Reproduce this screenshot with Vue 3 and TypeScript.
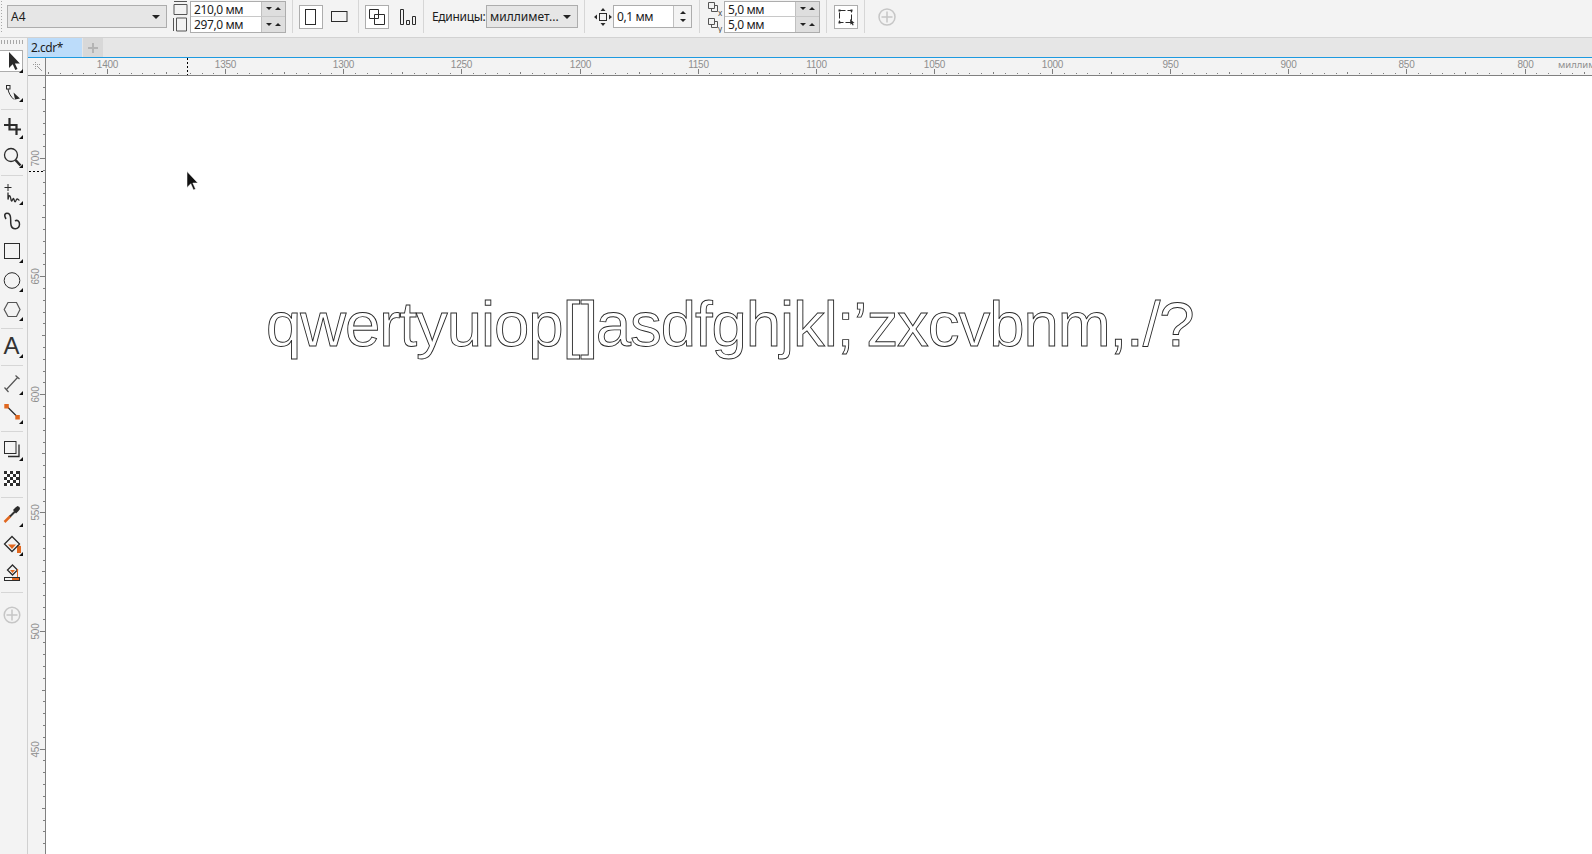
<template>
  <div class="app">
    <header class="topbar">
      <div class="grip" />
      <div class="select size-select"><span>A4</span><i class="caret" /></div>
      <div class="pair-icons">
        <svg width="15" height="15" viewBox="0 0 15 15"><path d="M1 .5h13M1 3.500h13v10H1z" /></svg>
        <svg width="15" height="15" viewBox="0 0 15 15"><path d="M.5 1v13M3.500 1h10v13h-10z" /></svg>
      </div>
      <div class="pair">
        <div class="pair-row"><span class="val">210,0 мм</span><span class="spin"><i class="caret small" /><i class="caret small up" /></span></div>
        <div class="pair-row"><span class="val">297,0 мм</span><span class="spin"><i class="caret small" /><i class="caret small up" /></span></div>
      </div>
      <div class="divider" />
      <button class="btn on"><svg width="12" height="16" viewBox="0 0 12 16"><rect x=".5" y=".5" width="10" height="15" /></svg></button>
      <button class="btn"><svg width="17" height="12" viewBox="0 0 17 12"><rect x=".5" y=".5" width="15.500" height="10" /></svg></button>
      <div class="divider d2" />
      <button class="btn on"><svg width="18" height="18" viewBox="0 0 18 18"><path d="M1.500 1.500h9v9h-9zM6.500 6.500h10v10h-10z" /></svg></button>
      <button class="btn wide"><svg width="17" height="16" viewBox="0 0 17 16"><path d="M1.500.5h3v15h-3zM7.500 11.500h3v4h-3zM13.500 7.500h3v8h-3z" /></svg></button>
      <div class="divider d3" />
      <span class="label">Единицы:</span>
      <div class="select unit-select"><span>миллимет...</span><i class="caret" /></div>
      <div class="divider d4" />
      <svg class="nudge" width="18" height="18" viewBox="0 0 18 18">
        <path class="solid" d="M9 0l2.500 3h-5zM9 18l2.500-3h-5zM0 9l3-2.500v5zM18 9l-3-2.500v5z" />
        <rect x="5.500" y="5.500" width="7" height="7" />
      </svg>
      <div class="single">
        <span class="val">0,1 мм</span>
        <span class="spin column"><i class="caret small up" /><i class="caret small" /></span>
      </div>
      <div class="divider d5" />
      <div class="pair-icons dup">
        <svg width="16" height="16" viewBox="0 0 16 16"><path d="M.5 1.500h6v6h-6zM3.500 7.500v3h6v-6h-3" /><text x="10" y="15">x</text></svg>
        <svg width="16" height="16" viewBox="0 0 16 16"><path d="M.5 1.500h6v6h-6zM3.500 7.500v3h6v-6h-3" /><text x="10" y="15">y</text></svg>
      </div>
      <div class="pair dup-pair">
        <div class="pair-row"><span class="val">5,0 мм</span><span class="spin"><i class="caret small" /><i class="caret small up" /></span></div>
        <div class="pair-row"><span class="val">5,0 мм</span><span class="spin"><i class="caret small" /><i class="caret small up" /></span></div>
      </div>
      <div class="divider d6" />
      <button class="btn on bleed">
        <svg width="18" height="18" viewBox="0 0 18 18">
          <rect x="2.500" y="2.500" width="12" height="12" stroke-dasharray="6 2" />
          <path class="solid" d="M1.500 1.500h2v2h-2zM13.500 1.500h2v2h-2zM1.500 13.500h2v2h-2zM13 11l4.500 4-1.800.3 1 1.700-1 .5-1-1.700-1.200 1z" />
        </svg>
      </button>
      <div class="divider d7" />
      <svg class="add-top" width="18" height="18" viewBox="0 0 18 18">
        <circle cx="9" cy="9" r="8" />
        <path d="M9 3.500v11M3.500 9h11" />
      </svg>
    </header>

    <div class="body">
      <aside class="toolbox">
        <div class="tool-grip" />
        <div class="tool fly">
          <div class="tool-on" />
          <svg viewBox="0 0 27 29"><path class="fill" d="M9 6v16l3.700-3.800 2.600 5.800 2.200-1-2.600-5.600h5z" transform="translate(0 -1)" /></svg>
        </div>
        <div class="tool fly">
          <svg viewBox="0 0 27 29"><rect x="6.500" y="9.500" width="3.500" height="3.500" /><path d="M8 13c.5 4 3 8 6 10.500" /><path class="fill" d="M13.500 16.500l6.500 6-5 1z" /></svg>
        </div>
        <div class="sep" />
        <div class="tool fly">
          <svg viewBox="0 0 27 29" class="thick"><path d="M9.500 5v11.500H21M4 12h12.500v10" /></svg>
        </div>
        <div class="tool fly">
          <svg viewBox="0 0 27 29"><circle cx="11" cy="13" r="6.500" stroke-width="1.300" /><path d="M15.500 18l5 5.500" class="heavy" /></svg>
        </div>
        <div class="sep" />
        <div class="tool fly">
          <svg viewBox="0 0 27 29"><path d="M8 5v7M4.500 8.500h7" /><path d="M8 13.500v7c1-5 2-5 3 0s2-4 3 0 1.500 2 2.500 0 1.500 1 3 .5" class="mid" /></svg>
        </div>
        <div class="tool">
          <svg viewBox="0 0 27 29" class="curl"><path d="M6 11C3 6 6 4.500 8.500 5.500c3.500 1.500 1.500 7.500 2.500 11.500 1 5 8 5 8.500-.5.300-3.500-2.500-5-4.500-3.500" /></svg>
        </div>
        <div class="tool fly">
          <svg viewBox="0 0 27 29"><rect x="4.500" y="6.500" width="15" height="15" /></svg>
        </div>
        <div class="tool fly">
          <svg viewBox="0 0 27 29"><circle cx="12" cy="14.500" r="7.800" /></svg>
        </div>
        <div class="tool fly">
          <svg viewBox="0 0 27 29" class="gray"><path d="M8 7.500h8.500l3.500 7-3.500 7H8l-3.800-7z" /></svg>
        </div>
        <div class="sep" />
        <div class="tool fly">
          <svg viewBox="0 0 27 29"><text class="tool-a" x="3.500" y="22">A</text></svg>
        </div>
        <div class="sep" />
        <div class="tool fly">
          <svg viewBox="0 0 27 29" class="gray"><path d="M6 21L18 8M4.500 18.500l4 4.500M15.500 6.500l4 3.500" /></svg>
        </div>
        <div class="tool fly">
          <svg viewBox="0 0 27 29"><path d="M6.500 8l11 11" class="mid" /><rect class="orange" x="4.300" y="6" width="4.500" height="4.500" /><rect class="orange" x="15.300" y="17" width="4.500" height="4.500" /></svg>
        </div>
        <div class="sep" />
        <div class="tool fly">
          <svg viewBox="0 0 27 29"><rect x="4.500" y="6.500" width="11.500" height="12" /><path d="M19 9.500v12H8" class="mid" /></svg>
        </div>
        <div class="tool">
          <svg viewBox="0 0 27 29"><rect class="check" x="4" y="7" width="16" height="15" /><path class="white" d="M7 7h3v3H7zM13 7h3v3h-3zM4 10h3v3H4zM10 10h3v3h-3zM16 10h3v3h-3zM7 13h3v3H7zM13 13h3v3h-3zM4 16h3v3H4zM10 16h3v3h-3zM16 16h3v3h-3zM7 19h3v3H7zM13 19h3v3h-3z" /></svg>
        </div>
        <div class="sep" />
        <div class="tool fly">
          <svg viewBox="0 0 27 29"><path class="heavy orange-line" d="M4.500 21l6-6" /><path d="M10 15.500l5-5" class="gray-line" /><path class="fill" d="M13 9l2.500-2.500 2-1.500 2 1 .5 2-1.500 2-2.500 2.500z" /></svg>
        </div>
        <div class="tool fly">
          <svg viewBox="0 0 27 29"><path class="orange" d="M17 15l4 1v7h-4z" /><path class="orange" d="M8 14.500h8L12 19z" /><path d="M12 6.500l7.500 7.500-7.500 7.500L4.500 14z" class="mid" /></svg>
        </div>
        <div class="tool">
          <svg viewBox="0 0 27 29"><path d="M12.500 6l5 5-5 5-5-5z" class="mid" /><path class="orange" d="M10 11h5l-2.500 3zM17 10h1v8h-1z" /><rect x="4.500" y="18.500" width="15" height="3" /><rect class="orange" x="12" y="19" width="7" height="2" /></svg>
        </div>
        <div class="sep" />
        <div class="tool add">
          <svg viewBox="0 0 27 29" class="add-icon"><circle cx="12" cy="14" r="7.800" /><path d="M12 8.500v11M6.500 14h11" /></svg>
        </div>
      </aside>

      <div class="doc">
        <div class="tabs">
          <div class="tab">2.cdr*</div>
          <div class="tab-add"><span /></div>
        </div>
        <main class="stage">
          <div class="corner">
            <svg width="10" height="10" viewBox="0 0 10 10"><path d="M0 2.500h7M2.500 0v7" stroke-dasharray="1 1" /><path d="M4 4l5 5" /></svg>
          </div>
          <svg class="hruler" width="1546" height="18">
            <g v-for="t in hTicks" :key="t.x">
              <rect :x="t.x" :y="t.y" width="1" :height="16 - t.y" />
              <text v-if="t.label" :x="t.x + 0.500" y="10" text-anchor="middle">{{ t.label }}</text>
            </g>
            <text x="1512" y="10" class="unit">миллиметры</text>
            <path class="marker" d="M141.500 0V17" />
          </svg>
          <svg class="vruler" width="18" height="778">
            <g v-for="t in vTicks" :key="t.y">
              <rect :x="t.x" :y="t.y" :width="17 - t.x" height="1" />
              <text v-if="t.label" text-anchor="middle" :transform="`translate(11 ${t.y + 0.500}) rotate(-90)`">{{ t.label }}</text>
            </g>
            <path class="marker" d="M1 95.500H17" />
          </svg>
          <div class="canvas">
            <div class="outline">qwertyuiop<span class="open">[</span><span class="close">]</span>asdfghjkl;’zxcvbnm,./?</div>
            <svg class="cursor" width="13" height="22" viewBox="0 0 13 21"><path d="M1 1v16l3.800-3.800 2.700 6.300 2-.9-2.700-6.100h5z" /></svg>
          </div>
        </main>
      </div>
    </div>
  </div>
</template>

<script setup lang="ts">
// ruler scale: 50 units are 118.13px on screen
const step = 118.13 / 10;
const originX = 107 - 46;
const originY = 158 - 76;

function kind(i: number) {
  if (i % 10 === 0) return 2;
  if (i % 5 === 0) return 1;
  return 0;
}

const hTicks = Array.from({ length: 132 }, (_, n) => {
  const i = n - 5;
  const k = kind(i);
  return {
    x: Math.round(originX + i * step),
    y: k === 2 ? 11 : k === 1 ? 14 : 15,
    label: k === 2 ? String(1400 - i * 5) : "",
  };
}).filter((t) => t.x >= 1 && t.x < 1546);

const vTicks = Array.from({ length: 70 }, (_, n) => {
  const i = n - 7;
  const k = kind(i);
  return {
    y: Math.round(originY + i * step),
    x: k === 2 ? 12 : k === 1 ? 14 : 15,
    label: k === 2 ? String(700 - i * 5) : "",
  };
}).filter((t) => t.y >= 0 && t.y < 778);
</script>

<style>
html,
body {
  margin: 0;
  background: #fff;
}
</style>

<style scoped>
.app {
  width: 1592px;
  height: 854px;
  overflow: hidden;
  display: flex;
  flex-direction: column;
  font-family: "Noto Sans", "Open Sans", sans-serif;
  font-size: 12px;
  color: #1c1c1c;
  background: #f3f3f3;
}
svg {
  display: block;
  fill: none;
  stroke: #2b2b2b;
  stroke-width: 1;
}

/* top property bar */
.topbar {
  height: 38px;
  flex: none;
  box-sizing: border-box;
  padding-bottom: 4px;
  display: flex;
  align-items: center;
  border-bottom: 1px solid #d2d2d2;
}
.grip {
  width: 3px;
  height: 33px;
  background: radial-gradient(circle, #a8a8a8 0.6px, transparent 0.8px) 0 0 / 3px 3px;
}
.select {
  height: 23px;
  display: flex;
  align-items: center;
  justify-content: space-between;
  box-sizing: border-box;
  background: #e6e6e6;
  border: 1px solid #adadad;
  padding: 0 6px 0 3px;
}
.size-select {
  width: 160px;
  margin-left: 4px;
}
.unit-select {
  width: 92px;
  margin-left: 2px;
}
.caret {
  width: 0;
  height: 0;
  border-left: 4px solid transparent;
  border-right: 4px solid transparent;
  border-top: 4px solid #222;
}
.caret.small {
  border-left-width: 3px;
  border-right-width: 3px;
  border-top-width: 3px;
}
.caret.up {
  transform: rotate(180deg);
}
.pair-icons {
  width: 15px;
  margin-left: 6px;
  display: flex;
  flex-direction: column;
  gap: 1px;
}
.pair-icons svg {
  stroke: #555;
}
.pair {
  width: 96px;
  height: 32px;
  margin-left: 2px;
  box-sizing: border-box;
  border: 1px solid #adadad;
  display: flex;
  flex-direction: column;
}
.pair-row {
  flex: 1;
  display: flex;
  background: #fff;
  min-height: 0;
}
.pair-row + .pair-row {
  border-top: 1px solid #c8c8c8;
}
.val {
  flex: 1;
  padding-left: 3px;
  line-height: 15px;
  letter-spacing: -0.4px;
}
.spin {
  width: 24px;
  flex: none;
  display: flex;
  align-items: center;
  justify-content: space-around;
  background: #dedede;
  border-left: 1px solid #c0c0c0;
  padding: 0 2px;
  box-sizing: border-box;
}
.spin.column {
  width: 18px;
  flex-direction: column;
  padding: 3px 0;
  background: #f3f3f3;
}
.divider {
  width: 1px;
  height: 33px;
  margin: 0 6px 0 6px;
  background: #d6d6d6;
}
.d2 {
  margin-left: 7px;
}
.d3 {
  margin-left: 2px;
  margin-right: 8px;
}
.d4 {
  margin-left: 6px;
  margin-right: 0;
}
.d5 {
  margin-left: 7px;
  margin-right: 0;
}
.d6 {
  margin-left: 6px;
  margin-right: 7px;
}
.d7 {
  margin-left: 6px;
  margin-right: 0;
}
.btn {
  width: 24px;
  height: 24px;
  padding: 0;
  display: flex;
  align-items: center;
  justify-content: center;
  background: transparent;
  border: 1px solid transparent;
  box-sizing: border-box;
}
.btn.on {
  background: #fff;
  border-color: #adadad;
}
.btn + .btn {
  margin-left: 4px;
}
.btn.wide {
  width: 28px;
}
.label {
  width: 52px;
  letter-spacing: -0.3px;
  white-space: nowrap;
}
.nudge {
  margin-left: 9px;
}
.nudge .solid,
.bleed .solid {
  fill: #2b2b2b;
  stroke: none;
}
.single {
  width: 79px;
  height: 23px;
  margin-left: 1px;
  box-sizing: border-box;
  border: 1px solid #adadad;
  background: #fff;
  display: flex;
}
.single .val {
  line-height: 21px;
}
.dup {
  margin-left: 8px;
  width: 16px;
  gap: 0;
}
.dup text {
  font: 8px "Noto Sans", sans-serif;
  fill: #444;
  stroke: none;
}
.dup-pair {
  margin-left: 0;
}
.add-top {
  margin-left: 13px;
  stroke: #c6c6c6;
  stroke-width: 1.500;
}

.body {
  flex: 1;
  min-height: 0;
  display: flex;
}

/* left toolbox */
.toolbox {
  width: 28px;
  flex: none;
  box-sizing: border-box;
  border-right: 1px solid #d0d0d0;
}
.tool-grip {
  height: 4px;
  width: 24px;
  margin: 2px 0 3px;
  background: radial-gradient(circle, #a8a8a8 0.6px, transparent 0.8px) 0 0 / 3px 2px;
}
.tool {
  height: 29px;
  width: 27px;
  position: relative;
}
.tool svg {
  position: relative;
  width: 27px;
  height: 29px;
}
.tool.fly::after {
  content: "";
  position: absolute;
  right: 4px;
  bottom: 3px;
  border-left: 4px solid transparent;
  border-bottom: 4px solid #111;
}
.tool-on {
  position: absolute;
  left: 0;
  top: 3px;
  width: 23px;
  height: 22px;
  background: #fff;
  border: 1px solid #adadad;
  border-left: none;
  box-sizing: border-box;
}
.tool.add {
  margin-top: 5px;
}
.sep {
  height: 8px;
  width: 27px;
  display: flex;
  align-items: center;
}
.sep::before {
  content: "";
  margin-left: 1px;
  width: 22px;
  height: 1px;
  background: #d6d6d6;
}
.tool .fill {
  fill: #2a2a2a;
  stroke: none;
}
.tool .mid {
  stroke-width: 1.300;
}
.tool .curl {
  stroke-width: 1.500;
}
.tool .thick {
  stroke-width: 2.200;
}
.tool .heavy {
  stroke-width: 2.500;
}
.tool .gray {
  stroke: #555;
  stroke-width: 1.200;
}
.tool .orange {
  fill: #e0671f;
  stroke: none;
}
.tool .orange-line {
  stroke: #e0671f;
}
.tool .gray-line {
  stroke: #333;
  stroke-width: 2;
}
.tool .check {
  fill: #2e2e2e;
  stroke: none;
}
.tool .white {
  fill: #fff;
  stroke: none;
}
.tool .tool-a {
  font: 24px "Liberation Sans", sans-serif;
  fill: #333;
  stroke: none;
}
.tool .add-icon {
  stroke: #c6c6c6;
  stroke-width: 1.500;
}

/* document tabs */
.doc {
  flex: 1;
  min-width: 0;
  display: flex;
  flex-direction: column;
}
.tabs {
  height: 20px;
  flex: none;
  box-sizing: border-box;
  display: flex;
  background: #e6e6e6;
  border-bottom: 1px solid #1d9ae0;
}
.tab {
  width: 54px;
  padding-left: 3px;
  box-sizing: border-box;
  line-height: 19px;
  letter-spacing: -0.5px;
  background: #bcdcfa;
}
.tab-add {
  width: 20px;
  margin-left: 1px;
  background: #d8d8d8;
  display: flex;
  align-items: center;
  justify-content: center;
}
.tab-add span {
  width: 10px;
  height: 10px;
  background:
    linear-gradient(#b4b4b4, #b4b4b4) center / 10px 2px no-repeat,
    linear-gradient(#b4b4b4, #b4b4b4) center / 2px 10px no-repeat;
}

/* rulers and page */
.stage {
  flex: 1;
  min-height: 0;
  display: grid;
  grid-template-columns: 18px 1fr;
  grid-template-rows: 18px 1fr;
}
.corner {
  padding: 4px 0 0 5px;
  box-sizing: border-box;
  border-right: 1px solid #808080;
  border-bottom: 1px solid #808080;
}
.corner svg {
  stroke: #999;
}
.hruler {
  height: 18px;
  border-bottom: 1px solid #808080;
  stroke: none;
  box-sizing: border-box;
}
.vruler {
  width: 18px;
  border-right: 1px solid #808080;
  stroke: none;
  box-sizing: border-box;
}
.hruler rect,
.vruler rect {
  fill: #7d7d7d;
}
.hruler text,
.vruler text {
  font: 10px "Liberation Sans", sans-serif;
  letter-spacing: -0.2px;
  fill: #8e8e8e;
  stroke: none;
}
.hruler .unit {
  font: 9.500px "Noto Sans", sans-serif;
  letter-spacing: 0;
}
.marker {
  stroke: #000;
  stroke-dasharray: 2 2;
}
.canvas {
  position: relative;
  background: #fff;
  overflow: hidden;
}
.outline {
  position: absolute;
  left: 220px;
  top: 212px;
  font-family: "Liberation Sans", Arial, sans-serif;
  font-size: 63.500px;
  line-height: 73px;
  letter-spacing: -1.060px;
  white-space: nowrap;
  color: transparent;
  -webkit-text-stroke: 0.900px #2a2a2a;
}
.outline .open {
  letter-spacing: 0.400px;
}
.outline .close {
  letter-spacing: -2.500px;
}
.cursor {
  position: absolute;
  left: 140px;
  top: 94px;
}
.cursor path {
  fill: #111;
  stroke: #fff;
  stroke-width: 0.500;
}
</style>
